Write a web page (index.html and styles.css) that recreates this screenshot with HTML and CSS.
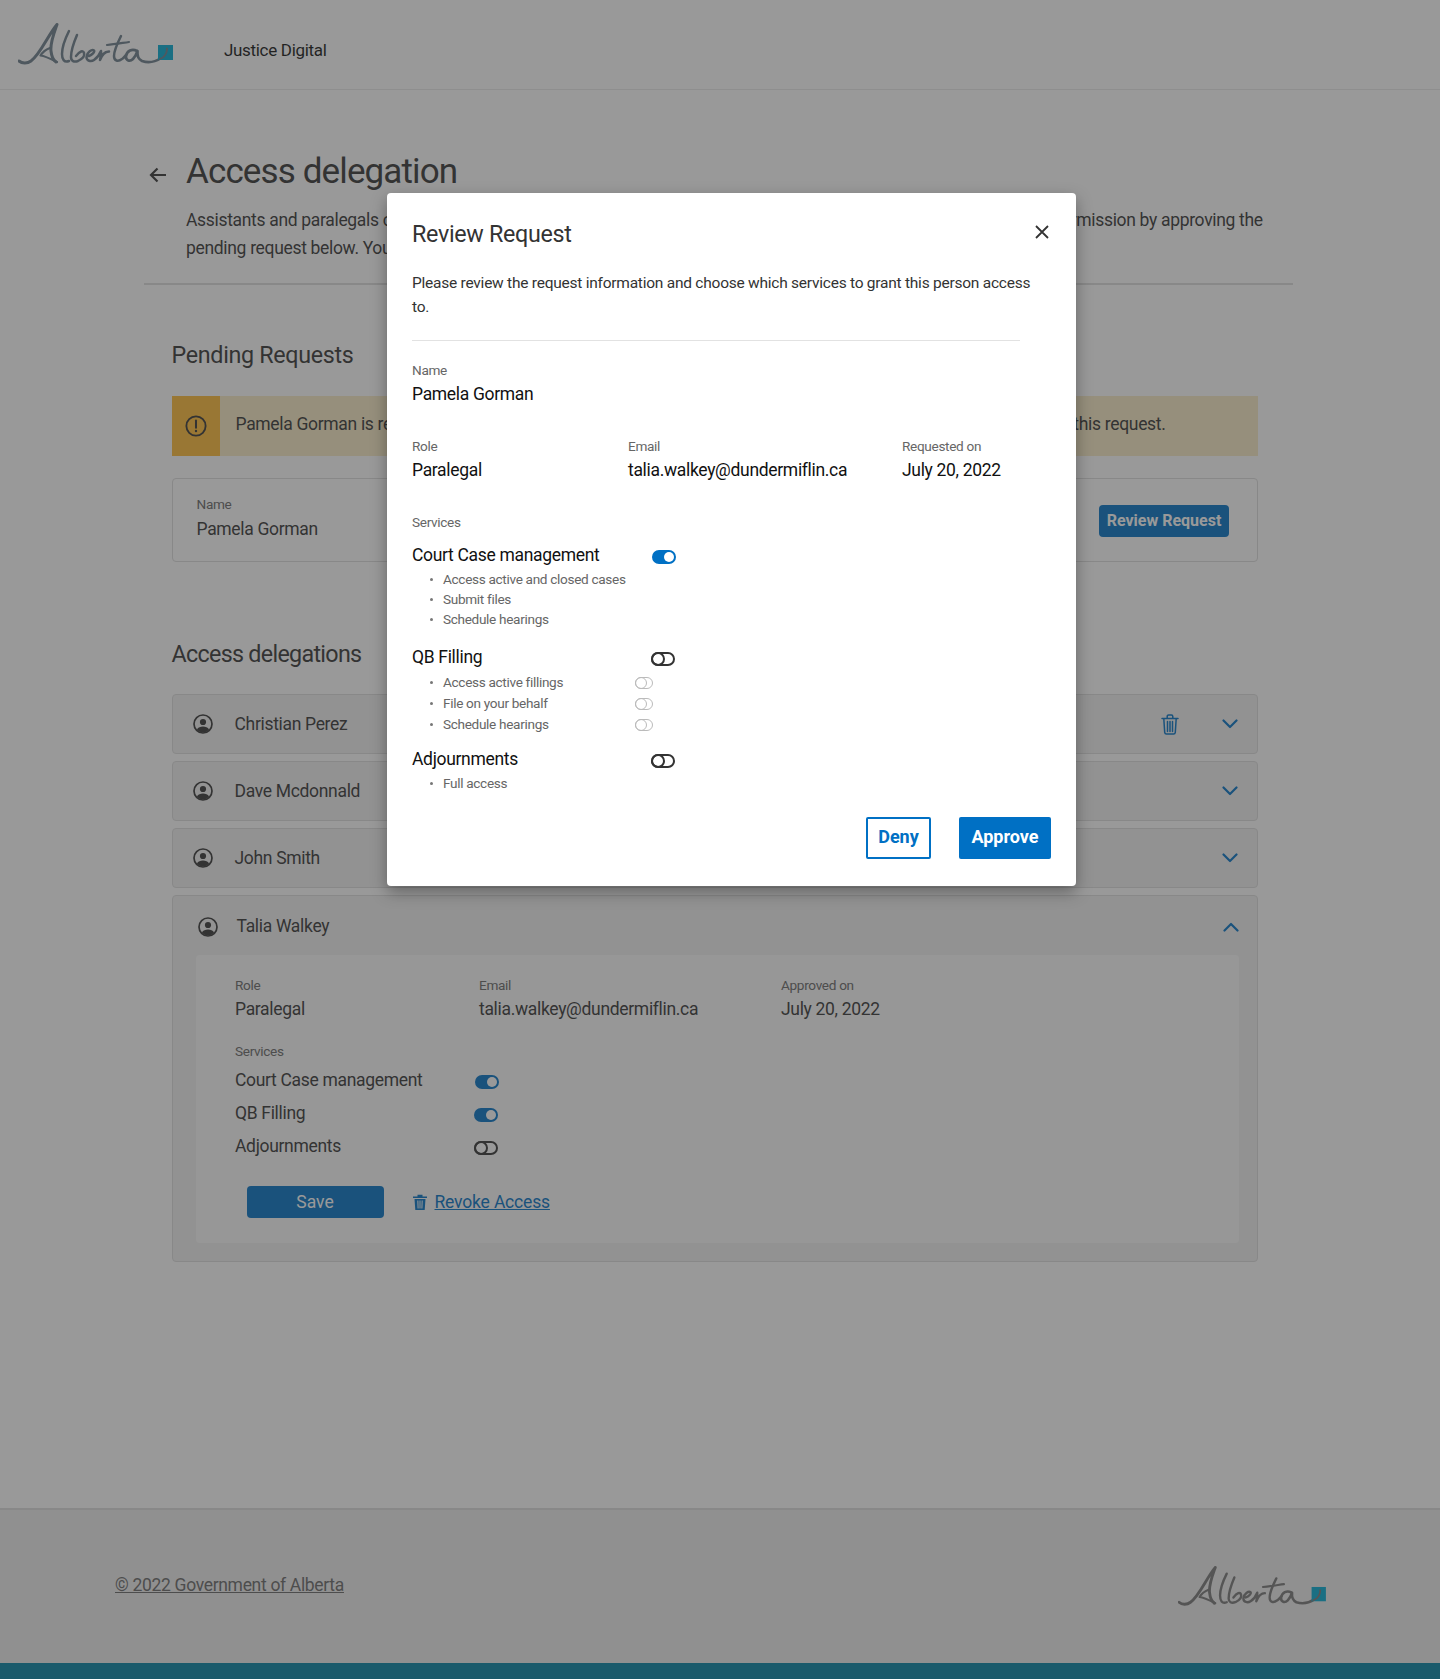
FILE: index.html
```html
<!DOCTYPE html>
<html lang="en">
<head>
<meta charset="utf-8">
<title>Access delegation</title>
<link rel="stylesheet" href="styles.css">
</head>
<body>
<svg class="defs" width="0" height="0" aria-hidden="true">
  <defs>
    <symbol id="person" viewBox="0 0 20 20">
      <circle cx="10" cy="10" r="9" fill="none" stroke="currentColor" stroke-width="1.7"/>
      <circle cx="10" cy="8" r="3.1" fill="currentColor"/>
      <path d="M3.900 15.600C5.200 13.300 7.400 12.600 10 12.600s4.800.7 6.100 3C14.600 17.600 12.400 18.600 10 18.600s-4.600-1-6.100-3z" fill="currentColor"/>
    </symbol>
    <symbol id="chevron" viewBox="0 0 16 10">
      <path d="M1.500 1.500L8 8l6.500-6.500" fill="none" stroke="currentColor" stroke-width="2.200" stroke-linecap="round" stroke-linejoin="round"/>
    </symbol>
    <symbol id="trash" viewBox="0 0 18 21">
      <path d="M1 4.500h16M6.200 4.500V2.400C6.200 1.600 6.800 1 7.600 1h2.800c.8 0 1.400.6 1.400 1.400v2.100M2.800 4.500l.9 13.900c.1.900.8 1.600 1.700 1.600h7.200c.9 0 1.600-.7 1.700-1.600l.9-13.900M6.500 7.500v10M9 7.500v10M11.500 7.500v10" fill="none" stroke="currentColor" stroke-width="1.500" stroke-linecap="round"/>
    </symbol>
    <symbol id="logo" viewBox="0 0 155 43">
      <g fill="none" stroke="currentColor" stroke-linecap="round" stroke-linejoin="round">
        <path stroke-width="3" d="M1 38C4 40.500 9 41 13 38C22 32 30 12 39 1.500C36 10 32 20 33 28C33.500 33 35 37 38 39"/>
        <path stroke-width="2.200" d="M32 25C27 27 24 30 22.500 32.500C27 33 33 36 39 39"/>
        <path stroke-width="2.500" d="M51 8C47 16 44 24 44 31C44 36 46 40 51 38"/>
        <path stroke-width="2.500" d="M59 12C56 19 53 27 53 34C53 38 56 39.500 60 38C64 36 67 33 66 30C65 27 62 28 58 33"/>
        <path stroke-width="2.500" d="M71 33C74 32 77 29 76 27.500C74 26 69 29 68.500 34C68.500 38 73 39 76 37C79 35 81 33 83 28C83.500 31 82.500 34 82 37C84 32 86 28.500 91 28.500"/>
        <path stroke-width="2.500" d="M103 13C100 19 96 27 96 33C96 38 100 39 104 36C106 35 107 33 108 32"/>
        <path stroke-width="2.200" d="M89 22C96 21.500 104 20 111 19"/>
        <path stroke-width="2.700" d="M119 28C114 25 109 28 108 33C107.500 38 112 39 115 36C117 34 118.500 31 119.500 28C119 33 120 36 124 38C130 40 137 39 143 35"/>
      </g>
      <rect class="logo-square" x="140" y="22" width="15" height="15"/>
      <path d="M141 37C146 36 150 32 150 25L148 24.500C148.500 30 145.500 34 141 35.500z" fill="currentColor"/>
    </symbol>
  </defs>
</svg>

<div class="page">
  <header class="site-header">
    <svg class="logo" role="img" aria-label="Alberta"><use href="#logo"/></svg>
    <span class="service-name">Justice Digital</span>
  </header>

  <main class="main">
    <div class="title-row">
      <svg class="back" viewBox="0 0 18 16" aria-hidden="true"><path d="M17 8H2M8.500 1.500L2 8l6.500 6.500" fill="none" stroke="currentColor" stroke-width="2.200"/></svg>
      <h1 class="title">Access delegation</h1>
    </div>
    <p class="intro">Assistants and paralegals can request to access services on your behalf. You may review any request and give them permission by approving the<br>pending request below. You can also manage or revoke access to existing delegations at any time.</p>

    <section class="section">
      <h2 class="section-title">Pending Requests</h2>
      <div class="callout">
        <div class="callout-icon">
          <svg viewBox="0 0 24 24" width="22" height="22" aria-hidden="true"><circle cx="12" cy="12" r="10.500" fill="none" stroke="currentColor" stroke-width="2"/><path d="M12 6v8" stroke="currentColor" stroke-width="2.200" stroke-linecap="round"/><circle cx="12" cy="17.500" r="1.300" fill="currentColor"/></svg>
        </div>
        <p class="callout-text">Pamela Gorman is requesting access to your service as paralegal. Please review the details and approve or deny this request.</p>
      </div>
      <div class="pending-card">
        <div>
          <div class="label">Name</div>
          <div class="value">Pamela Gorman</div>
        </div>
        <button class="btn-review">Review Request</button>
      </div>
    </section>

    <section class="section section-delegations">
      <h2 class="section-title">Access delegations</h2>
      <div class="accordion">
        <div class="acc-row">
          <svg class="person"><use href="#person"/></svg><span class="acc-name">Christian Perez</span>
          <svg class="acc-trash"><use href="#trash"/></svg>
          <svg class="chev"><use href="#chevron"/></svg>
        </div>
        <div class="acc-row">
          <svg class="person"><use href="#person"/></svg><span class="acc-name">Dave Mcdonnald</span>
          <svg class="chev push"><use href="#chevron"/></svg>
        </div>
        <div class="acc-row">
          <svg class="person"><use href="#person"/></svg><span class="acc-name">John Smith</span>
          <svg class="chev push"><use href="#chevron"/></svg>
        </div>
        <div class="acc-open">
          <div class="acc-row acc-row-open">
            <svg class="person"><use href="#person"/></svg><span class="acc-name">Talia Walkey</span>
            <svg class="chev push up"><use href="#chevron"/></svg>
          </div>
          <div class="panel">
            <div class="panel-grid">
              <div><div class="label">Role</div><div class="value">Paralegal</div></div>
              <div><div class="label">Email</div><div class="value">talia.walkey@dundermiflin.ca</div></div>
              <div><div class="label">Approved on</div><div class="value">July 20, 2022</div></div>
            </div>
            <div class="label panel-services">Services</div>
            <div class="svc-grid">
              <span class="value">Court Case management</span><span class="toggle on nudge"></span>
              <span class="value">QB Filling</span><span class="toggle on"></span>
              <span class="value">Adjournments</span><span class="toggle"></span>
            </div>
            <div class="panel-actions">
              <button class="btn-save">Save</button>
              <svg class="revoke-icon" viewBox="0 0 14 16" aria-hidden="true"><path d="M0 2.500h14v1.500H0zM4.500 2.500V.8h5v1.700zM1.500 5h11l-.8 11H2.300zM4.300 6.500l.3 8h1l-.2-8zM6.500 6.500v8h1v-8zM8.700 6.500l-.3 8h1l.3-8z" fill="currentColor" fill-rule="evenodd"/></svg>
              <a class="revoke" href="#">Revoke Access</a>
            </div>
          </div>
        </div>
      </div>
    </section>
  </main>

  <footer class="site-footer">
    <a class="copyright" href="#">© 2022 Government of Alberta</a>
    <svg class="logo logo-footer" role="img" aria-label="Alberta"><use href="#logo"/></svg>
  </footer>
  <div class="band"></div>

  <div class="overlay">
    <div class="modal">
      <div class="modal-head">
        <h2 class="modal-title">Review Request</h2>
        <svg class="close" viewBox="0 0 14 14" aria-hidden="true"><path d="M1 1l12 12M13 1L1 13" stroke="currentColor" stroke-width="1.800"/></svg>
      </div>
      <p class="modal-text">Please review the request information and choose which services to grant this person access to.</p>
      <hr class="modal-rule">
      <div class="label modal-name-label">Name</div>
      <div class="value">Pamela Gorman</div>
      <div class="modal-grid">
        <div><div class="label">Role</div><div class="value">Paralegal</div></div>
        <div><div class="label">Email</div><div class="value">talia.walkey@dundermiflin.ca</div></div>
        <div><div class="label">Requested on</div><div class="value">July 20, 2022</div></div>
      </div>
      <div class="label modal-services">Services</div>

      <div class="svc-head svc-first"><span class="value">Court Case management</span><span class="toggle on nudge"></span></div>
      <ul class="svc-list">
        <li>Access active and closed cases</li>
        <li>Submit files</li>
        <li>Schedule hearings</li>
      </ul>
      <div class="svc-head svc-second"><span class="value">QB Filling</span><span class="toggle"></span></div>
      <ul class="svc-list svc-list-toggles">
        <li><span class="svc-item">Access active fillings</span><span class="toggle small"></span></li>
        <li><span class="svc-item">File on your behalf</span><span class="toggle small"></span></li>
        <li><span class="svc-item">Schedule hearings</span><span class="toggle small"></span></li>
      </ul>
      <div class="svc-head svc-third"><span class="value">Adjournments</span><span class="toggle"></span></div>
      <ul class="svc-list svc-list-tight">
        <li>Full access</li>
      </ul>
      <div class="modal-actions">
        <button class="btn-deny">Deny</button>
        <button class="btn-approve">Approve</button>
      </div>
    </div>
  </div>
</div>
</body>
</html>
```
FILE: styles.css
```css
*, *::before, *::after { box-sizing: border-box; }
html, body { margin: 0; padding: 0; }
body { font-family: Roboto, "Liberation Sans", sans-serif; color: #333; background: #fff; letter-spacing: -0.02em; }
.defs { position: absolute; }
h1, h2, p { margin: 0; font-weight: 400; }
button { font-family: inherit; border: 0; cursor: pointer; letter-spacing: 0; }

.page { position: relative; width: 1440px; height: 1679px; display: flex; flex-direction: column; overflow: hidden; }

.site-header { height: 90px; flex: none; display: flex; align-items: center; padding-left: 18px; gap: 51px; border-bottom: 1px solid #e8e8e8; }
.logo { width: 155px; height: 43px; color: #6a7d8a; flex: none; }
.logo-square { fill: #00aad2; }
.service-name { font-size: 17px; color: #111; margin-top: 10px; }

.main { flex: 1; margin-left: 144px; width: 1149px; padding-top: 60px; }
.title-row { display: flex; align-items: center; padding-left: 5px; gap: 19px; height: 44px; }
.back { width: 18px; height: 16px; color: #333; margin-top: 6px; }
.title { font-size: 35px; line-height: 44px; color: #333; letter-spacing: -0.025em; }
.intro { margin-top: 12px; padding: 0 0 21px 42px; font-size: 17.500px; line-height: 28px; letter-spacing: -0.0185em; color: #333; white-space: nowrap; border-bottom: 2px solid #ddd; }

.section { margin-left: 27.500px; width: 1086.500px; }
.section-title { font-size: 23.300px; line-height: 32px; margin-top: 54px; color: #333; }
.section-delegations .section-title { margin-top: 76px; letter-spacing: -0.03em; }

.callout { margin-top: 25px; height: 60px; display: flex; background: #f9ebc5; }
.callout-icon { width: 48px; flex: none; background: #feba35; display: flex; align-items: center; justify-content: center; color: #333; }
.callout-text { padding-left: 16px; font-size: 17.500px; line-height: 56px; color: #333; white-space: nowrap; }

.pending-card { margin-top: 22px; height: 84px; border: 1px solid #dcdcdc; border-radius: 4px; padding: 14px 28px 0 24px; display: flex; justify-content: space-between; }
.pending-card .value { margin-top: 2px; }
.btn-review { align-self: flex-start; margin-top: 12px; height: 32px; width: 130px; padding: 0 0 2px; background: #0070c4; color: #fff; font-size: 16px; font-weight: 700; border-radius: 4px; }

.label { font-size: 13.600px; line-height: 22px; color: #666; }
.value { font-size: 17.500px; line-height: 24px; color: #333; }

.accordion { margin-top: 24px; display: flex; flex-direction: column; gap: 7px; }
.acc-row { height: 60px; display: flex; align-items: center; padding-left: 20px; background: #f1f1f1; border: 1px solid #dcdcdc; border-radius: 4px; }
.person { width: 20px; height: 20px; color: #333; flex: none; }
.acc-name { margin-left: 22px; font-size: 17.500px; color: #333; }
.acc-trash { width: 18px; height: 21px; color: #0070c4; margin-left: auto; margin-right: 43px; }
.chev { width: 16px; height: 10px; color: #0070c4; margin-right: 19px; }
.push { margin-left: auto; }
.up { transform: rotate(180deg); margin-top: 0; }

.acc-open { height: 367px; background: #f1f1f1; border: 1px solid #dcdcdc; border-radius: 4px; }
.acc-row-open { border: 0; background: none; height: 59px; padding-left: 25px; padding-top: 3px; }
.acc-row-open .acc-name { margin-left: 19px; margin-top: -3px; }
.acc-row-open .chev { margin-right: 18px; }

.panel { margin: 0 18px 0 23px; height: 288px; background: #fafafa; border-radius: 4px; padding: 19px 0 0 39.500px; }
.panel-grid { display: grid; grid-template-columns: 244px 302px 1fr; }
.panel-grid .label { line-height: 23px; }
.panel-services { margin-top: 19px; }
.svc-grid { margin-top: 6px; display: grid; grid-template-columns: 239px 1fr; row-gap: 9px; align-items: center; }
.panel-actions { margin-top: 28px; margin-left: 11.500px; display: flex; align-items: center; }
.btn-save { width: 137px; height: 32px; background: #0070c4; color: #fff; font-size: 17.500px; border-radius: 4px; padding: 0; }
.revoke-icon { width: 14px; height: 16px; color: #0070c4; margin-left: 29px; }
.revoke { margin-left: 8px; font-size: 17.500px; letter-spacing: -0.01em; color: #0070c4; }

.toggle { display: block; width: 24px; height: 14px; border: 2px solid #333; border-radius: 7px; position: relative; margin-top: 4px; background: #fff; }
.toggle::before { content: ""; position: absolute; left: -2px; top: -2px; width: 14px; height: 14px; border: 2px solid #333; border-radius: 50%; }
.toggle.on { background: #0070c4; border-color: #0070c4; }
.toggle.on::before { left: auto; right: 0; top: 0; width: 10px; height: 10px; border: 0; background: #fff; }
.toggle.small { width: 18px; height: 12px; border-width: 1px; border-color: #bbb; border-radius: 6px; margin-top: 0; }
.toggle.small::before { left: -1px; top: -1px; width: 12px; height: 12px; border-width: 1px; border-color: #bbb; }
.nudge { margin-left: 1px; }

.site-footer { height: 155px; flex: none; background: #ededed; border-top: 2px solid #ddd; display: flex; align-items: center; justify-content: space-between; padding: 0 114px 0 115px; }
.copyright { font-size: 17.500px; color: #666; margin-bottom: 4px; }
.logo-footer { width: 148px; height: 41px; color: #777; }
.band { height: 16px; flex: none; background: #0081a2; }

.overlay { position: absolute; inset: 0; background: rgba(51, 51, 51, .5); }
.modal { position: absolute; left: 387px; top: 193px; width: 689px; height: 693px; background: #fff; border-radius: 4px; box-shadow: 0 6px 16px rgba(0, 0, 0, .35); padding: 25px 25px 0 25px; }
.modal-head { display: flex; justify-content: space-between; padding-right: 2px; }
.modal-title { font-size: 23.300px; line-height: 32px; color: #333; }
.close { width: 14px; height: 14px; color: #333; margin-top: 7px; }
.modal-text { margin-top: 21px; font-size: 15.500px; line-height: 24px; letter-spacing: -0.0155em; color: #333; width: 625px; }
.modal-rule { margin: 21px 0 0; border: 0; height: 1px; background: #e2e2e2; width: 608px; }
.modal .label { line-height: 23px; }
.modal-name-label { margin-top: 18px; }
.modal .value { color: #111; }
.modal-grid { margin-top: 29px; display: grid; grid-template-columns: 216px 274px 1fr; }
.modal-services { margin-top: 29px; }
.svc-head { display: grid; grid-template-columns: 239px 1fr; align-items: center; }
.svc-first { margin-top: 9px; }
.svc-second { margin-top: 16px; }
.svc-third { margin-top: 12px; }
.svc-list { list-style: none; margin: 2px 0 0; padding: 0; font-size: 13.600px; line-height: 20px; color: #666; }
.svc-list li { display: flex; align-items: center; }
.svc-list li::before { content: ""; width: 3px; height: 3px; border-radius: 50%; background: #777; margin: 0 10px 0 18px; flex: none; }
.svc-list-toggles { margin-top: 3px; line-height: 21px; }
.svc-item { width: 192px; }
.modal-actions { margin-top: 24px; display: flex; justify-content: flex-end; gap: 28px; }
.btn-deny { width: 65px; height: 42px; background: #fff; border: 2px solid #0070c4; color: #0070c4; font-size: 18px; font-weight: 700; border-radius: 2px; padding: 0 0 3px; }
.btn-approve { width: 92px; height: 42px; background: #0070c4; color: #fff; font-size: 18px; font-weight: 700; border-radius: 2px; padding: 0 0 3px; }
```
